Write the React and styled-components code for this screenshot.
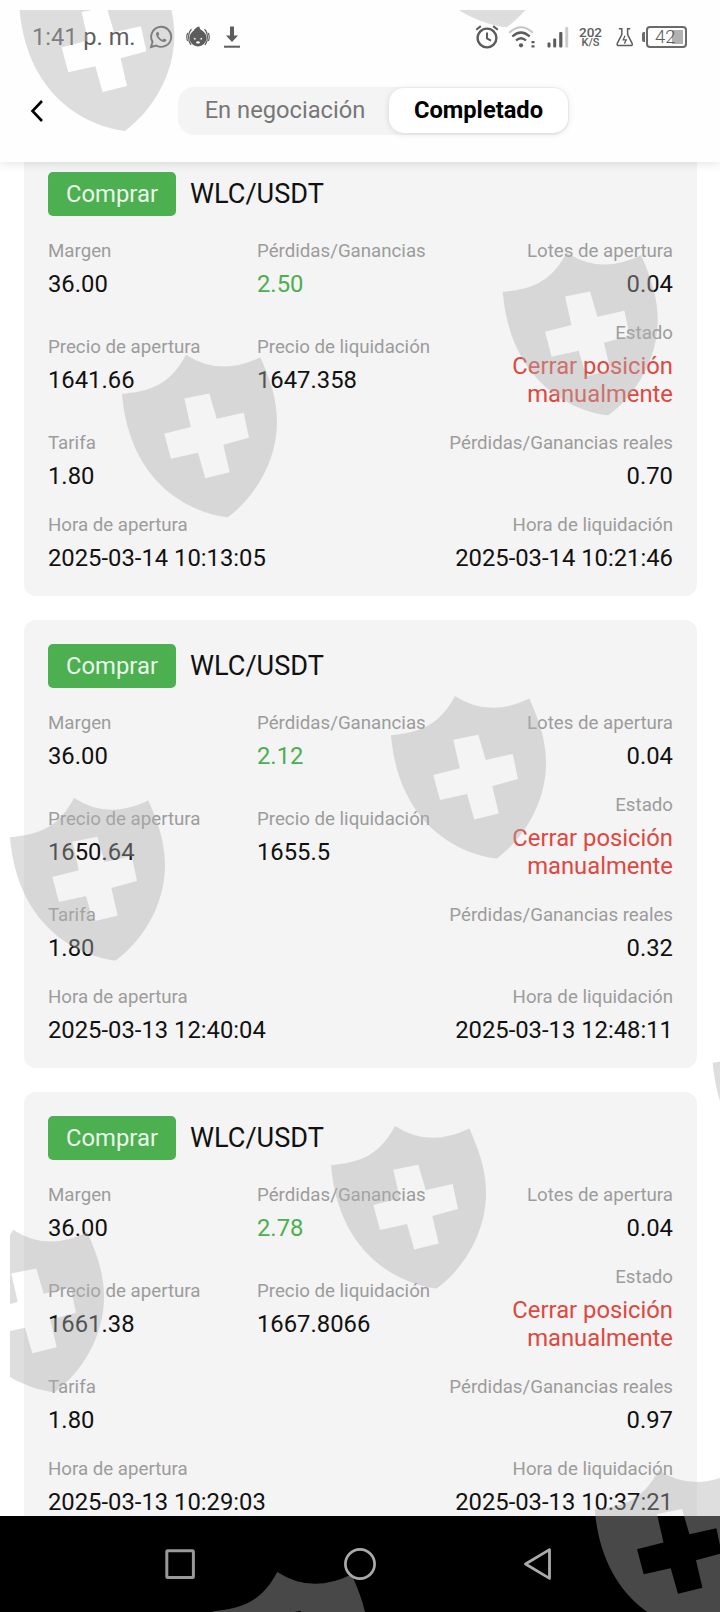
import React from 'react';
import styled, { createGlobalStyle, css } from 'styled-components';

const GlobalStyle = createGlobalStyle`
  * {
    box-sizing: border-box;
  }

  body {
    margin: 0;
    background-color: #fff;
    font-family: Roboto, 'Liberation Sans', sans-serif;
  }
`;

const Screen = styled.div`
  position: relative;
  width: 720px;
  height: 1612px;
  overflow: hidden;
  display: flex;
  flex-direction: column;
  background-color: #fff;
`;

const Header = styled.header`
  flex: none;
  height: 162px;
  z-index: 1;
  background-color: #fefefe;
  box-shadow: 0 1px 10px rgba(0, 0, 0, 0.12);
`;

const StatusBar = styled.div`
  height: 73px;
  padding: 0 33px 0 32px;
  display: flex;
  align-items: center;
  color: #5c5c5c;

  svg {
    display: block;
    flex: none;
  }
`;

const Clock = styled.span`
  width: 117px;
  font-size: 23.6px;
  line-height: 28px;
  white-space: nowrap;
`;

const Notifications = styled.div`
  flex: 1;
  display: flex;
  align-items: center;
  gap: 13px;
`;

const Indicators = styled.div`
  display: flex;
  align-items: center;
`;

const NetSpeed = styled.div`
  width: 27px;
  margin: 1px 12px 0 8px;
  display: flex;
  flex-direction: column;
  align-items: center;
  font-size: 13.5px;
  font-weight: 500;
  line-height: 12px;

  small {
    font-size: 11px;
    line-height: 10px;
  }
`;

const TitleBar = styled.div`
  height: 75px;
  padding-left: 29px;
  display: flex;
  align-items: center;
`;

const BackButton = styled.button`
  width: 149px;
  height: 28px;
  padding: 0;
  border: none;
  background: none;
  display: flex;
`;

const Tabs = styled.div`
  width: 391px;
  height: 48px;
  padding: 1px;
  display: flex;
  border-radius: 16px;
  background-color: #f4f4f4;
`;

const Tab = styled.div`
  flex: 1;
  height: 45px;
  padding-left: 2px;
  display: flex;
  align-items: center;
  justify-content: center;
  border-radius: 15px;
  font-size: 23.7px;
  color: #777;

  ${(props) =>
    props.$active &&
    css`
      flex: none;
      width: 179px;
      padding-left: 0;
      background-color: #fff;
      color: #000;
      font-weight: 700;
      box-shadow: 0 1px 6px rgba(0, 0, 0, 0.12);
    `}
`;

const List = styled.main`
  flex: 1;
  min-height: 0;
  padding: 0 23px 0 24px;
  margin-top: -14px;
  overflow: hidden;
  display: flex;
  flex-direction: column;
  gap: 24px;
`;

const Card = styled.section`
  flex: none;
  height: 448px;
  padding: 24px;
  border-radius: 12px;
  background-color: #f4f4f4;
  display: flex;
  flex-direction: column;
  gap: 24px;
`;

const CardHeader = styled.div`
  display: flex;
  align-items: center;
  gap: 14px;
`;

const Badge = styled.span`
  width: 128px;
  height: 44px;
  border-radius: 5px;
  background-color: #4caf50;
  color: #eaf7ea;
  font-size: 23.8px;
  line-height: 44px;
  text-align: center;
`;

const Pair = styled.span`
  color: #111;
  font-size: 27.1px;
  line-height: 44px;
`;

const Row = styled.div`
  display: flex;
  align-items: center;
  justify-content: space-between;

  ${(props) =>
    props.$columns &&
    css`
      display: grid;
      grid-template-columns: 209px 209px 1fr;
    `}
`;

const Field = styled.div`
  display: flex;
  flex-direction: column;
  gap: 8px;
  white-space: nowrap;
  text-align: ${(props) => (props.$end ? 'right' : 'left')};
`;

const Label = styled.span`
  color: #9c9c9c;
  font-size: 18.7px;
  line-height: 22px;
`;

const valueColors = {
  gain: '#4caf50',
  alert: '#e0473f',
};

const Value = styled.span`
  color: ${(props) => valueColors[props.$tone] || '#111'};
  font-size: 23.8px;
  line-height: 28px;
  white-space: normal;
`;

const NavBar = styled.nav`
  flex: none;
  height: 96px;
  padding: 0 160px 0 164px;
  display: flex;
  align-items: center;
  justify-content: space-between;
  background-color: #000;

  svg:nth-child(2) {
    margin-left: 4px;
  }
`;

const WatermarkLayer = styled.svg`
  position: absolute;
  inset: 0;
  z-index: 2;
  pointer-events: none;
`;

const SHIELD =
  'M0 0C25 -3 46 -6 64 -39.3Q98 -17 138.3 -36.7C148 -15 155 5 155 28C155 68 132 104 105.7 123.3C75 120 8 95 0 0Z' +
  'M62.3 4.5L87.3 -.5L94.7 24.7L121.7 18.7L127 43.7L101.3 50.7L107.7 78.3L83.3 84.3L76 58.7L49 64.7L42.3 39.7L68.8 33Z';

const shieldSpots = [
  [19.3, 7.6],
  [401, -96],
  [502.7, 292],
  [122, 394],
  [391, 735.3],
  [10, 837.3],
  [331, 1165.3],
  [712.7, 1062.7],
  [-51, 1269],
  [594.7, 1509.5],
  [213.3, 1611.3],
];

const trades = [
  {
    profit: '2.50',
    open: '1641.66',
    close: '1647.358',
    net: '0.70',
    openTime: '2025-03-14 10:13:05',
    closeTime: '2025-03-14 10:21:46',
  },
  {
    profit: '2.12',
    open: '1650.64',
    close: '1655.5',
    net: '0.32',
    openTime: '2025-03-13 12:40:04',
    closeTime: '2025-03-13 12:48:11',
  },
  {
    profit: '2.78',
    open: '1661.38',
    close: '1667.8066',
    net: '0.97',
    openTime: '2025-03-13 10:29:03',
    closeTime: '2025-03-13 10:37:21',
  },
];

function Item({ label, value, tone, end }) {
  return (
    <Field $end={end}>
      <Label>{label}</Label>
      <Value $tone={tone}>{value}</Value>
    </Field>
  );
}

function Trade({ trade }) {
  return (
    <Card>
      <CardHeader>
        <Badge>Comprar</Badge>
        <Pair>WLC/USDT</Pair>
      </CardHeader>
      <Row $columns>
        <Item label="Margen" value="36.00" />
        <Item label="Pérdidas/Ganancias" value={trade.profit} tone="gain" />
        <Item label="Lotes de apertura" value="0.04" end />
      </Row>
      <Row $columns>
        <Item label="Precio de apertura" value={trade.open} />
        <Item label="Precio de liquidación" value={trade.close} />
        <Item label="Estado" value="Cerrar posición manualmente" tone="alert" end />
      </Row>
      <Row>
        <Item label="Tarifa" value="1.80" />
        <Item label="Pérdidas/Ganancias reales" value={trade.net} end />
      </Row>
      <Row>
        <Item label="Hora de apertura" value={trade.openTime} />
        <Item label="Hora de liquidación" value={trade.closeTime} end />
      </Row>
    </Card>
  );
}

function WhatsAppIcon() {
  return (
    <svg width="24" height="24" viewBox="0 0 24 24" fill="none" stroke="currentColor">
      <path d="M2 22L3.5 16.8A10 10 0 1 1 7.2 20.5Z" strokeWidth="1.9" />
      <path
        d="M8.6 6.7C7 7.3 6.7 9 7.3 10.5C8.5 13.7 11 16 14.2 16.9C15.9 17.3 17.4 16.3 17.5 14.7L15 13.4L13.7 14.8C11.8 14 10.3 12.6 9.3 10.7L10.3 9.5L9.3 6.8Z"
        fill="currentColor"
        stroke="none"
      />
    </svg>
  );
}

function FaceIcon() {
  return (
    <svg width="24" height="24" viewBox="0 0 24 24">
      <circle cx="12" cy="13" r="8.5" fill="currentColor" />
      <path d="M7 7Q9 2 13.5 1.5Q13 3.5 17 7Z" fill="currentColor" />
      <path
        d="M5.5 4.2Q2.6 7 2.6 12T5 20M18.5 4.2Q21.4 7 21.4 12T19 20M1.6 8Q0 12 1.6 16M22.4 8Q24 12 22.4 16"
        fill="none"
        stroke="currentColor"
        strokeWidth="1.2"
      />
      <path d="M7.6 12.6L10.4 14L8.4 14.8ZM16.4 12.6L13.6 14L15.6 14.8Z" fill="#fff" />
      <ellipse cx="12" cy="17.4" rx="1.8" ry="1.2" fill="#fff" />
    </svg>
  );
}

function DownloadIcon() {
  return (
    <svg width="18" height="24" viewBox="0 0 18 24">
      <path d="M7 1.5H11V10.5H15L9 17L3 10.5H7Z" fill="currentColor" />
      <rect x="1" y="20.7" width="16" height="2" fill="currentColor" />
    </svg>
  );
}

function AlarmIcon() {
  return (
    <svg width="24" height="24" viewBox="0 0 24 24" fill="none" stroke="currentColor">
      <circle cx="12" cy="13" r="9.4" strokeWidth="2.4" />
      <path d="M12 7.5V13.5L16 15.6" strokeWidth="2" />
      <path d="M1.2 4.8L5.8 1.1M22.8 4.8L18.2 1.1" strokeWidth="2" />
    </svg>
  );
}

function WifiIcon() {
  return (
    <svg width="28" height="24" viewBox="0 0 28 24" fill="none" stroke="currentColor">
      <path d="M1.2 7.8Q13 -3.2 24.8 7.8" strokeWidth="2" opacity="0.35" />
      <path d="M4.3 11.5Q13 3.6 21.7 11.5" strokeWidth="2.3" />
      <path d="M8 15.5Q13 11 18 15.5" strokeWidth="2.3" />
      <circle cx="13" cy="20.3" r="2.1" fill="currentColor" stroke="none" />
      <path d="M23.5 17.2H26.5M23.5 21.3H26.5" strokeWidth="2.2" />
    </svg>
  );
}

function SignalIcon() {
  return (
    <svg width="22" height="24" viewBox="0 0 22 24" fill="currentColor">
      <rect x="0.5" y="17.5" width="3" height="5" rx="1" />
      <rect x="6.2" y="13.5" width="3" height="9" rx="1" />
      <rect x="12.2" y="7" width="3.2" height="15.5" rx="1" />
      <rect x="18.2" y="2" width="3" height="20.5" rx="1" opacity="0.3" />
    </svg>
  );
}

function FlaskIcon() {
  return (
    <svg width="18" height="24" viewBox="0 0 18 24" fill="none" stroke="currentColor" strokeWidth="1.5">
      <path d="M2.8 3.8H5.8V9.6L1.3 18.4Q.5 20.6 2.8 20.6H14.6Q16.9 20.6 16.1 18.4L11.6 9.6V3.8H14.2" />
      <path d="M9 10.8L7.2 14.8H10.2L8.4 18.6" strokeWidth="1.3" />
    </svg>
  );
}

const Battery = styled.div`
  position: relative;
  width: 41px;
  height: 22px;
  margin-left: 12px;
  border: 2px solid #6a6a6a;
  border-radius: 4px;
  background: linear-gradient(#b2b2b2, #b2b2b2) 24px 2px / 11px 14px no-repeat;
  color: #5c5c5c;
  font-size: 18.5px;
  font-weight: 300;
  line-height: 19px;
  padding-left: 7px;

  &::before {
    content: '';
    position: absolute;
    left: -6px;
    top: 4px;
    width: 3px;
    height: 10px;
    border-radius: 2px 0 0 2px;
    background-color: #6a6a6a;
  }
`;

function Watermark() {
  return (
    <WatermarkLayer width="720" height="1612" viewBox="0 0 720 1612">
      <clipPath id="watermark-area">
        <rect x="10" y="10" width="710" height="1602" />
      </clipPath>
      <g clipPath="url(#watermark-area)" fill="#b0b0b0" fillOpacity="0.41" fillRule="evenodd">
        {shieldSpots.map(([x, y]) => (
          <path key={`${x}-${y}`} d={SHIELD} transform={`translate(${x} ${y})`} />
        ))}
      </g>
    </WatermarkLayer>
  );
}

function App() {
  return (
    <Screen>
      <GlobalStyle />
      <Header>
        <StatusBar>
          <Clock>1:41 p. m.</Clock>
          <Notifications>
            <WhatsAppIcon />
            <FaceIcon />
            <DownloadIcon />
          </Notifications>
          <Indicators>
            <AlarmIcon />
            <svg width="9" height="1" />
            <WifiIcon />
            <svg width="11" height="1" />
            <SignalIcon />
            <NetSpeed>
              <span>202</span>
              <small>K/S</small>
            </NetSpeed>
            <FlaskIcon />
            <Battery>42</Battery>
          </Indicators>
        </StatusBar>
        <TitleBar>
          <BackButton aria-label="Volver">
            <svg width="16" height="28" viewBox="0 0 16 28">
              <path d="M13 4L3.5 14L13 24" fill="none" stroke="#000" strokeWidth="2.6" />
            </svg>
          </BackButton>
          <Tabs>
            <Tab>En negociación</Tab>
            <Tab $active>Completado</Tab>
          </Tabs>
        </TitleBar>
      </Header>
      <List>
        {trades.map((trade) => (
          <Trade trade={trade} key={trade.openTime} />
        ))}
      </List>
      <NavBar>
        <svg width="32" height="32" viewBox="0 0 32 32">
          <rect x="2.8" y="2.8" width="26.6" height="26.6" rx="1" fill="none" stroke="#999" strokeWidth="3" />
        </svg>
        <svg width="34" height="34" viewBox="0 0 34 34">
          <circle cx="17" cy="17" r="14.6" fill="none" stroke="#aaa" strokeWidth="2.7" />
        </svg>
        <svg width="40" height="34" viewBox="0 0 40 34">
          <path d="M5.5 17L29.5 2.6V31.4Z" fill="none" stroke="#aaa" strokeWidth="2.8" strokeLinejoin="round" />
        </svg>
      </NavBar>
      <Watermark />
    </Screen>
  );
}

export default App;
